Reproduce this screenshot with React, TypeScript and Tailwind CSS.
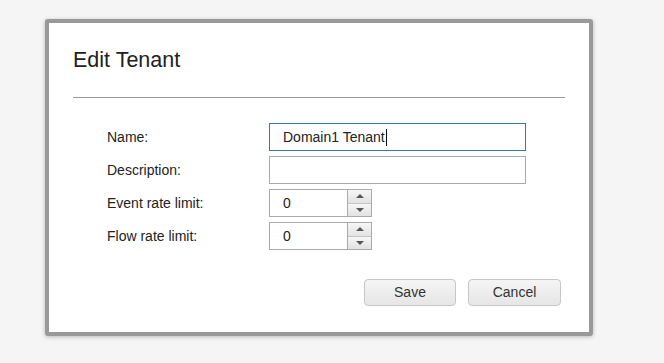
import React from "react";

const font = { fontFamily: '"Liberation Sans", Arial, sans-serif' };

const Spinner = ({ value }: { value: string }) => (
  <div className="flex h-[28px] w-[103px] border border-[#aaaaaa] bg-white">
    <div className="flex flex-1 items-center pl-[13px] text-[14px] text-[#222]">{value}</div>
    <div className="flex w-[24px] flex-col border-l border-[#aaaaaa]">
      <div className="flex flex-1 items-center justify-center border-b border-[#c4c4c4] bg-gradient-to-b from-[#f6f6f6] to-[#e2e2e2]">
        <span className="h-0 w-0 border-x-[4px] border-b-[4px] border-x-transparent border-b-[#555]" />
      </div>
      <div className="flex flex-1 items-center justify-center bg-gradient-to-b from-[#f6f6f6] to-[#e2e2e2]">
        <span className="h-0 w-0 border-x-[4px] border-t-[4px] border-x-transparent border-t-[#555]" />
      </div>
    </div>
  </div>
);

const Row = ({ label, children }: { label: string; children: React.ReactNode }) => (
  <div className="flex h-[28px] items-center">
    <div className="w-[162px] text-[14px] text-[#222]">{label}</div>
    {children}
  </div>
);

export default function App() {
  return (
    <div className="h-[363px] w-[664px] bg-[#f5f5f5] pl-[45px] pt-[19px]" style={font}>
      <div className="w-[548px] rounded-[3px] border-[4px] border-[#999999] bg-white shadow-[0_1px_4px_rgba(0,0,0,0.25)]">
        <div className="px-[24px] pt-[25px]">
          <h1 className="text-[21.5px] leading-[24px] text-[#222]">Edit Tenant</h1>
          <div className="mt-[25px] h-px bg-[#999999]" />
        </div>
        <div className="mt-[25px] flex flex-col gap-[5px] pl-[58px]">
          <Row label="Name:">
            <div className="flex h-[28px] w-[257px] items-center border border-[#2f7ca8] pl-[13px] text-[14px] text-[#222]">
              Domain1 Tenant<span className="ml-px h-[17px] w-px bg-[#111]" />
            </div>
          </Row>
          <Row label="Description:">
            <div className="h-[28px] w-[257px] border border-[#aaaaaa]" />
          </Row>
          <Row label="Event rate limit:">
            <Spinner value="0" />
          </Row>
          <Row label="Flow rate limit:">
            <Spinner value="0" />
          </Row>
        </div>
        <div className="mt-[29px] flex justify-end gap-[12px] pb-[26px] pr-[28px]">
          <button className="h-[27px] w-[92px] rounded-[4px] border border-[#c6c6c6] bg-gradient-to-b from-[#f5f5f5] to-[#e6e6e6] text-[14px] text-[#333]">
            Save
          </button>
          <button className="h-[27px] w-[93px] rounded-[4px] border border-[#c6c6c6] bg-gradient-to-b from-[#f5f5f5] to-[#e6e6e6] text-[14px] text-[#333]">
            Cancel
          </button>
        </div>
      </div>
    </div>
  );
}
